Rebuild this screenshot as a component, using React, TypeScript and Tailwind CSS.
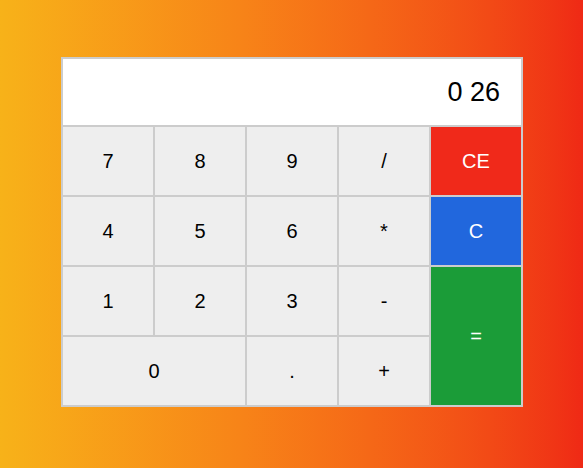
export default function App() {
  const btn = "flex items-center justify-center border border-[#cccccc] text-[20px]";
  const light = btn + " bg-[#eeeeee] text-black";
  return (
    <div
      className="w-[583px] h-[468px] bg-gradient-to-r from-[#f7b219] to-[#ef2915] pt-[57px] pl-[61px]"
      style={{ fontFamily: '"Liberation Sans", Arial, sans-serif' }}
    >
      <div className="w-[462px] border border-[#cccccc] bg-[#cccccc]">
        <div className="h-[68px] bg-white border border-[#cccccc] flex items-center justify-end pr-[21px] text-[27px] text-black">
          0 26
        </div>
        <div className="grid grid-cols-5 grid-rows-[repeat(4,70px)]">
          <div className={light}>7</div>
          <div className={light}>8</div>
          <div className={light}>9</div>
          <div className={light}>/</div>
          <div className={btn + " bg-[#f0291a] text-white"}>CE</div>
          <div className={light}>4</div>
          <div className={light}>5</div>
          <div className={light}>6</div>
          <div className={light}>*</div>
          <div className={btn + " bg-[#2167dd] text-white"}>C</div>
          <div className={light}>1</div>
          <div className={light}>2</div>
          <div className={light}>3</div>
          <div className={light}>-</div>
          <div className={btn + " bg-[#1b9c38] text-white row-span-2"}>=</div>
          <div className={light + " col-span-2"}>0</div>
          <div className={light}>.</div>
          <div className={light}>+</div>
        </div>
      </div>
    </div>
  );
}
